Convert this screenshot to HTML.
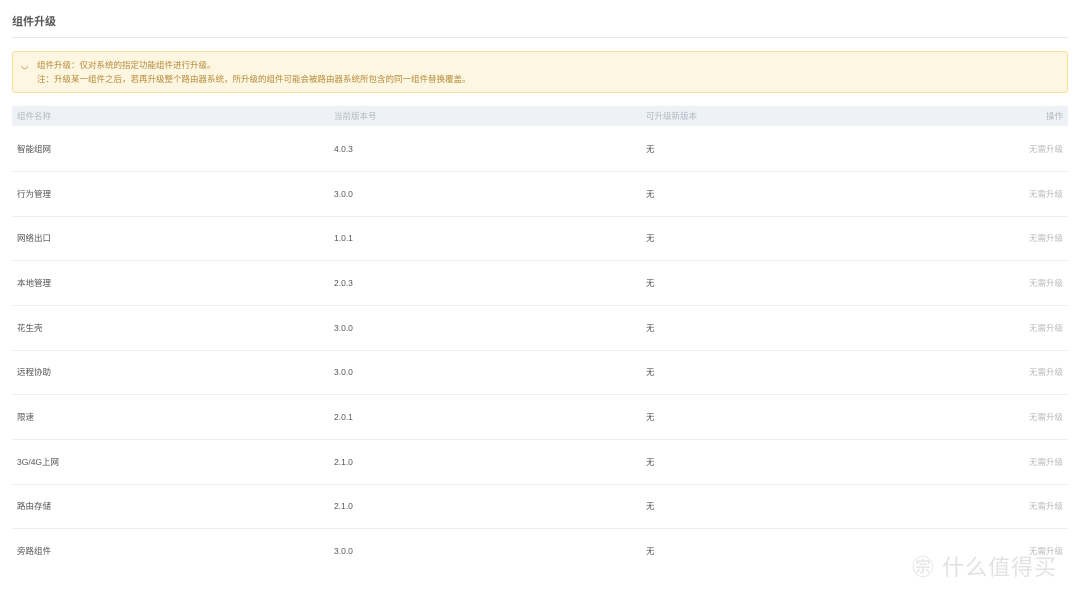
<!DOCTYPE html>
<html><head><meta charset="utf-8"><style>
body{margin:0;width:1080px;height:596px;background:#fff;font-family:"Liberation Sans","Noto Sans CJK SC",sans-serif;position:relative;overflow:hidden;color:#333}
.t{position:absolute;left:12px;top:13px;font-size:11px;font-weight:bold;color:#555}
.hr{position:absolute;left:12px;top:37px;width:1056px;height:1px;background:#e6e6e6}
.al{position:absolute;left:12px;top:51px;width:1054px;height:40px;background:#fdf7e2;border:1px solid #f3dfa0;border-radius:3px;font-size:8.5px;color:#b58a3a;line-height:14px}
.al div{position:absolute;left:24px;top:6px}
.al span{position:absolute;left:8px;top:6px}
.hd{position:absolute;left:12px;top:106px;width:1056px;height:20px;background:#eef1f5;font-size:8.5px;color:#b4bac4}
.c{position:absolute;white-space:nowrap;line-height:12px;height:12px}
.row{position:absolute;left:12px;width:1056px;height:44px;border-bottom:1px solid #eeeeee;font-size:8.5px;color:#555}
.row .c{top:16px}
.op{color:#bbb}
.wm{position:absolute;left:912px;top:555px;font-size:22px;line-height:26px;color:#e2e2e2;letter-spacing:1px}
</style></head><body>
<div class="t">组件升级</div>
<div class="hr"></div>
<div class="al"><span>◡</span><div>组件升级：仅对系统的指定功能组件进行升级。<br>注：升级某一组件之后，若再升级整个路由器系统，所升级的组件可能会被路由器系统所包含的同一组件替换覆盖。</div></div>
<div class="hd"><span class="c" style="left:5px;top:4px">组件名称</span><span class="c" style="left:322px;top:4px">当前版本号</span><span class="c" style="left:634px;top:4px">可升级新版本</span><span class="c" style="right:5px;top:4px">操作</span></div>
<div class="row" style="top:127px"><span class="c" style="left:5px">智能组网</span><span class="c" style="left:322px">4.0.3</span><span class="c" style="left:634px">无</span><span class="c op" style="right:5px">无需升级</span></div>
<div class="row" style="top:172px"><span class="c" style="left:5px">行为管理</span><span class="c" style="left:322px">3.0.0</span><span class="c" style="left:634px">无</span><span class="c op" style="right:5px">无需升级</span></div>
<div class="row" style="top:216px"><span class="c" style="left:5px">网络出口</span><span class="c" style="left:322px">1.0.1</span><span class="c" style="left:634px">无</span><span class="c op" style="right:5px">无需升级</span></div>
<div class="row" style="top:261px"><span class="c" style="left:5px">本地管理</span><span class="c" style="left:322px">2.0.3</span><span class="c" style="left:634px">无</span><span class="c op" style="right:5px">无需升级</span></div>
<div class="row" style="top:306px"><span class="c" style="left:5px">花生壳</span><span class="c" style="left:322px">3.0.0</span><span class="c" style="left:634px">无</span><span class="c op" style="right:5px">无需升级</span></div>
<div class="row" style="top:350px"><span class="c" style="left:5px">远程协助</span><span class="c" style="left:322px">3.0.0</span><span class="c" style="left:634px">无</span><span class="c op" style="right:5px">无需升级</span></div>
<div class="row" style="top:395px"><span class="c" style="left:5px">限速</span><span class="c" style="left:322px">2.0.1</span><span class="c" style="left:634px">无</span><span class="c op" style="right:5px">无需升级</span></div>
<div class="row" style="top:440px"><span class="c" style="left:5px">3G/4G上网</span><span class="c" style="left:322px">2.1.0</span><span class="c" style="left:634px">无</span><span class="c op" style="right:5px">无需升级</span></div>
<div class="row" style="top:484px"><span class="c" style="left:5px">路由存储</span><span class="c" style="left:322px">2.1.0</span><span class="c" style="left:634px">无</span><span class="c op" style="right:5px">无需升级</span></div>
<div class="row" style="top:529px;border-bottom:none"><span class="c" style="left:5px">旁路组件</span><span class="c" style="left:322px">3.0.0</span><span class="c" style="left:634px">无</span><span class="c op" style="right:5px">无需升级</span></div>
<div class="wm">㊪ 什么值得买</div>
</body></html>
